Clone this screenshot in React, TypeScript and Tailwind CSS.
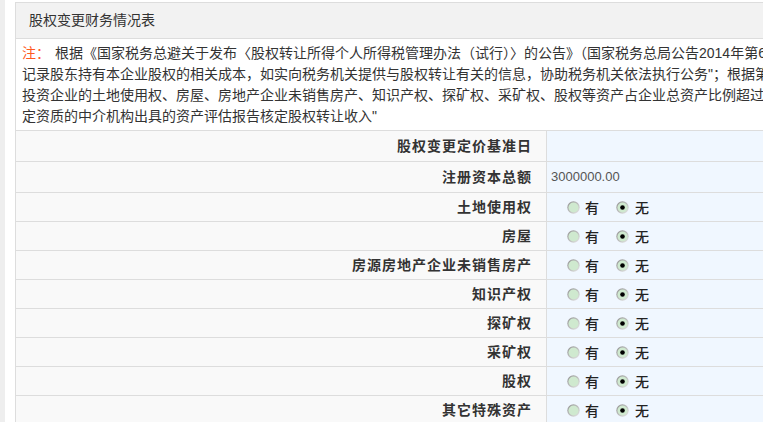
import React from 'react';

const FONT = { fontFamily: '"Liberation Sans", "Noto Sans CJK SC", sans-serif' };
const CJK = { fontFamily: '"Noto Sans CJK SC", sans-serif' };

interface Row {
  label: string;
  kind: 'empty' | 'text' | 'radio';
  value?: string;
}

const rows: Row[] = [
  { label: '股权变更定价基准日', kind: 'empty' },
  { label: '注册资本总额', kind: 'text', value: '3000000.00' },
  { label: '土地使用权', kind: 'radio' },
  { label: '房屋', kind: 'radio' },
  { label: '房源房地产企业未销售房产', kind: 'radio' },
  { label: '知识产权', kind: 'radio' },
  { label: '探矿权', kind: 'radio' },
  { label: '采矿权', kind: 'radio' },
  { label: '股权', kind: 'radio' },
  { label: '其它特殊资产', kind: 'radio' },
];

function Radio({ checked }: { checked: boolean }) {
  return (
    <svg width="13" height="13" viewBox="0 0 13 13" className="shrink-0">
      <defs>
        <linearGradient id="rg" x1="0" y1="0" x2="1" y2="1">
          <stop offset="0" stopColor="#8f8f8f" />
          <stop offset="1" stopColor="#e8e8e8" />
        </linearGradient>
      </defs>
      <circle cx="6.5" cy="6.5" r="6.2" fill="url(#rg)" />
      <circle cx="6.5" cy="6.5" r="5" fill="#cfe9cf" />
      {checked && <circle cx="6.5" cy="6.5" r="2.3" fill="#000" />}
    </svg>
  );
}

function RadioGroup() {
  return (
    <div className="flex items-center pl-[20px] text-[14px] font-medium text-[#222]" style={CJK}>
      <Radio checked={false} />
      <span className="ml-[5px]">有</span>
      <span className="ml-[17px] flex">
        <Radio checked />
      </span>
      <span className="ml-[6px]">无</span>
    </div>
  );
}

export default function App() {
  const noteLines = [
    '根据《国家税务总避关于发布〈股权转让所得个人所得税管理办法（试行）〉的公告》（国家税务总局公告2014年第67号）第十条"被投资企业应当',
    '记录股东持有本企业股权的相关成本，如实向税务机关提供与股权转让有关的信息，协助税务机关依法执行公务"；根据第十四条"被',
    '投资企业的土地使用权、房屋、房地产企业未销售房产、知识产权、探矿权、采矿权、股权等资产占企业总资产比例超过20%的，纳税人应当提供具有法',
    '定资质的中介机构出具的资产评估报告核定股权转让收入"',
  ];

  return (
    <div className="h-[422px] w-[763px] overflow-hidden bg-white" style={FONT}>
      <div className="flex h-full">
        <div className="w-[5px] shrink-0 bg-[#eeeeee]" />
        <div className="w-[10px] shrink-0 bg-white" />
        <div className="mt-[2px] w-[900px] shrink-0 border-l border-t border-[#dddddd]">
          <div className="flex h-[36px] items-center border-b border-[#dddddd] bg-[#f2f2f2] pl-[13px] text-[14px] text-[#333]">
            股权变更财务情况表
          </div>
          <div className="border-b border-[#dddddd] bg-white pb-[3px] pl-[6px] pt-[3px] text-[14px] leading-[21px] text-[#333]">
            {noteLines.map((line, i) => (
              <div key={i} className="whitespace-nowrap">
                {i === 0 && (
                  <span className="mr-[5px] text-[#ff5a1f]" style={CJK}>
                    注：
                  </span>
                )}
                {line}
              </div>
            ))}
          </div>
          {rows.map((row, i) => (
            <div
              key={i}
              className={`grid grid-cols-[531px_1fr] border-b border-[#dddddd] ${
                i < 2 ? 'h-[31px]' : 'h-[29px]'
              }`}
            >
              <div className="flex items-center justify-end border-r border-[#dddddd] bg-[#f9f9f9] pr-[14px] text-[14px] font-bold tracking-[1px] text-[#333]">
                {row.label}
              </div>
              <div className="flex items-center bg-[#f0f7ff]">
                {row.kind === 'text' && (
                  <span className="pl-[4px] text-[13px] text-[#555]">{row.value}</span>
                )}
                {row.kind === 'radio' && <RadioGroup />}
              </div>
            </div>
          ))}
        </div>
      </div>
    </div>
  );
}
